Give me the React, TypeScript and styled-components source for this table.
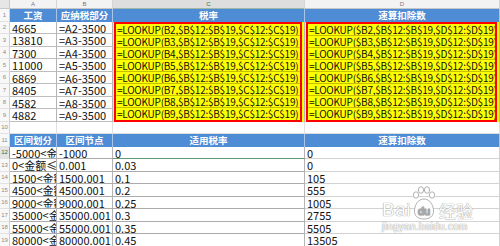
import React from "react";
import styled, { createGlobalStyle, css } from "styled-components";

const Global = createGlobalStyle`
  html, body { margin: 0; padding: 0; background: #ffffff; }
  #root { width: 500px; height: 246px; overflow: hidden; }
`;

const Sheet = styled.div`
  position: relative;
  display: grid;
  grid-template-columns: 10px 47px 56px 192px 195px;
  grid-template-rows: 9px;
  grid-auto-rows: 12.5px;
  width: 500px;
  height: 246px;
  overflow: hidden;
  background: #ffffff;
  font-family: "Noto Sans CJK SC", "Noto Sans", sans-serif;
  color: #111;
`;

const Corner = styled.div`
  box-sizing: border-box;
  background: #e6e6e6;
  border-right: 1px solid #c9c9c9;
  border-bottom: 1px solid #c9c9c9;
`;

const ColHeader = styled.div<{ $selected?: boolean }>`
  box-sizing: border-box;
  display: flex;
  align-items: center;
  justify-content: center;
  font-family: "Liberation Sans", sans-serif;
  font-size: 6px;
  line-height: 1;
  color: #7a7a7a;
  background: #f3f3f3;
  border-right: 1px solid #d6d6d6;
  border-bottom: 1px solid #c6c6c6;
  ${(p) =>
    p.$selected &&
    css`
      background: #dedede;
      color: #217346;
      border-bottom: 1px solid #9fb8a7;
    `}
`;

const RowHeader = styled.div<{ $active?: boolean }>`
  box-sizing: border-box;
  display: flex;
  align-items: center;
  justify-content: center;
  font-family: "Liberation Sans", sans-serif;
  font-size: 6px;
  color: #8a8a8a;
  background: #f8f8f8;
  border-right: 1px solid #cfcfcf;
  border-bottom: 1px solid #e2e2e2;
  ${(p) =>
    p.$active &&
    css`
      background: #e4e4e4;
      color: #217346;
      border-right: 1px solid #7aa58a;
    `}
`;

const Title = styled.div`
  box-sizing: border-box;
  display: flex;
  align-items: center;
  justify-content: center;
  background: #4f8cd6;
  color: #ffffff;
  font-weight: 700;
  font-size: 9.5px;
  line-height: 1;
  border-right: 1px solid #a9c6ea;
  white-space: nowrap;
  overflow: hidden;
`;

type Tone = "top" | "bottom" | "light" | "blank";

const Cell = styled.div<{ $tone: Tone; $active?: boolean }>`
  box-sizing: border-box;
  padding-left: 2px;
  font-size: 11px;
  line-height: 12px;
  white-space: nowrap;
  overflow: hidden;
  color: #111;
  ${(p) =>
    p.$tone === "top" &&
    css`
      border-right: 1px solid #b4b4b4;
      border-bottom: 1px solid #bdbdbd;
    `}
  ${(p) =>
    p.$tone === "bottom" &&
    css`
      border-right: 1px solid #b4b4b4;
      border-bottom: 1px solid #ababab;
    `}
  ${(p) =>
    p.$tone === "light" &&
    css`
      border-right: 1px solid #d2d2d2;
      border-bottom: 1px solid #d2d2d2;
    `}
  ${(p) =>
    p.$tone === "blank" &&
    css`
      border-right: 1px solid #e0e0e0;
      border-bottom: 1px solid #dcdcdc;
    `}
  ${(p) =>
    p.$active &&
    css`
      border-bottom: 1px solid #5f9a74;
    `}
`;

const FormulaBox = styled.div`
  grid-row: span 8;
  box-sizing: border-box;
  background: #ffff00;
  padding: 0 2px 0 1px;
  border-right: 1px solid #b9b9b9;
`;

const Frame = styled.div`
  box-sizing: border-box;
  height: 100%;
  border: 2px solid #ff0000;
  display: grid;
  grid-template-rows: repeat(8, 1fr);
`;

const FormulaLine = styled.div`
  box-sizing: border-box;
  padding-left: 1px;
  font-size: 10px;
  letter-spacing: -0.25px;
  line-height: 11px;
  white-space: nowrap;
  overflow: hidden;
  color: #111;
  border-bottom: 1px solid rgba(80, 80, 0, 0.35);
  &:last-child {
    border-bottom: none;
  }
`;

const Watermark = styled.div`
  position: absolute;
  left: 382px;
  top: 186px;
  display: flex;
  flex-direction: column;
  align-items: flex-start;
  color: #ffffff;
  pointer-events: none;
  text-shadow: 0 0 1px #9a9a9a, 0 0 1px #9a9a9a;
`;

const MarkRow = styled.div`
  display: flex;
  align-items: flex-end;
  gap: 1px;
`;

const MarkWord = styled.span<{ $size: number }>`
  font-family: "Liberation Sans", sans-serif;
  font-size: ${(p) => p.$size}px;
  line-height: 1;
  letter-spacing: 0.5px;
`;

const MarkCjk = styled.span`
  font-family: "Noto Sans CJK SC", sans-serif;
  font-size: 17px;
  line-height: 1;
  margin-left: 2px;
`;

const MarkUrl = styled.span`
  font-family: "Liberation Sans", sans-serif;
  font-size: 10px;
  line-height: 1;
  margin-top: 3px;
  letter-spacing: 0.3px;
`;

const topRows: [string, string][] = [
  ["4665", "=A2-3500"],
  ["13810", "=A3-3500"],
  ["7300", "=A4-3500"],
  ["11000", "=A5-3500"],
  ["6869", "=A6-3500"],
  ["8405", "=A7-3500"],
  ["4582", "=A8-3500"],
  ["4882", "=A9-3500"],
];

const bottomRows: [string, string, string, string][] = [
  ["-5000<金额≤0", "-1000", "0", "0"],
  ["0<金额≤1500", "0.001", "0.03", "0"],
  ["1500<金额≤4500", "1500.001", "0.1", "105"],
  ["4500<金额≤9000", "4500.001", "0.2", "555"],
  ["9000<金额≤35000", "9000.001", "0.25", "1005"],
  ["35000<金额≤55000", "35000.001", "0.3", "2755"],
  ["55000<金额≤80000", "55000.001", "0.35", "5505"],
  ["80000<金额", "80000.001", "0.45", "13505"],
];

const rowNums = [2, 3, 4, 5, 6, 7, 8, 9];

const Paw = () => (
  <svg width="24" height="34" viewBox="0 0 24 34" style={{ marginBottom: -1 }}>
    <g fill="#ffffff" stroke="#a8a8a8" strokeWidth="0.9">
      <ellipse cx="4" cy="9" rx="2.6" ry="3.2" />
      <ellipse cx="9" cy="4" rx="2.6" ry="3.3" />
      <ellipse cx="15" cy="4" rx="2.6" ry="3.3" />
      <ellipse cx="20" cy="9" rx="2.6" ry="3.2" />
      <path d="M12 13 C6 13 3 19 2.5 24 C2 30 6 33 12 33 C18 33 22 30 21.5 24 C21 19 18 13 12 13 Z" />
    </g>
    <text
      x="12"
      y="29"
      textAnchor="middle"
      fontFamily="Liberation Sans, sans-serif"
      fontSize="11"
      fill="#ffffff"
      stroke="#a8a8a8"
      strokeWidth="0.6"
    >
      du
    </text>
  </svg>
);

export default function App() {
  return (
    <>
      <Global />
      <Sheet>
        <Corner />
        <ColHeader>A</ColHeader>
        <ColHeader>B</ColHeader>
        <ColHeader $selected>C</ColHeader>
        <ColHeader>D</ColHeader>

        <RowHeader>1</RowHeader>
        <Title>工资</Title>
        <Title>应纳税部分</Title>
        <Title>税率</Title>
        <Title>速算扣除数</Title>

        {topRows.map(([a, b], i) => (
          <React.Fragment key={`t${i}`}>
            <RowHeader>{rowNums[i]}</RowHeader>
            <Cell $tone="top">{a}</Cell>
            <Cell $tone="top">{b}</Cell>
            {i === 0 && (
              <>
                <FormulaBox>
                  <Frame>
                    {rowNums.map((n) => (
                      <FormulaLine key={`c${n}`}>
                        {`=LOOKUP(B${n},$B$12:$B$19,$C$12:$C$19)`}
                      </FormulaLine>
                    ))}
                  </Frame>
                </FormulaBox>
                <FormulaBox>
                  <Frame>
                    {rowNums.map((n) => (
                      <FormulaLine key={`d${n}`}>
                        {`=LOOKUP($B${n},$B$12:$B$19,$D$12:$D$19)`}
                      </FormulaLine>
                    ))}
                  </Frame>
                </FormulaBox>
              </>
            )}
          </React.Fragment>
        ))}

        <RowHeader>10</RowHeader>
        <Cell $tone="blank" />
        <Cell $tone="blank" />
        <Cell $tone="blank" />
        <Cell $tone="blank" />

        <RowHeader>11</RowHeader>
        <Title>区间划分</Title>
        <Title>区间节点</Title>
        <Title>适用税率</Title>
        <Title>速算扣除数</Title>

        {bottomRows.map(([a, b, c, d], i) => (
          <React.Fragment key={`b${i}`}>
            <RowHeader $active={i === 0}>{12 + i}</RowHeader>
            <Cell $tone="bottom">{a}</Cell>
            <Cell $tone="bottom">{b}</Cell>
            <Cell $tone="bottom" $active={i === 0}>
              {c}
            </Cell>
            <Cell $tone="light">{d}</Cell>
          </React.Fragment>
        ))}

        <Watermark>
          <MarkRow>
            <MarkWord $size={19}>Bai</MarkWord>
            <Paw />
            <MarkCjk>经验</MarkCjk>
          </MarkRow>
          <MarkUrl>jingyan.baidu.com</MarkUrl>
        </Watermark>
      </Sheet>
    </>
  );
}
